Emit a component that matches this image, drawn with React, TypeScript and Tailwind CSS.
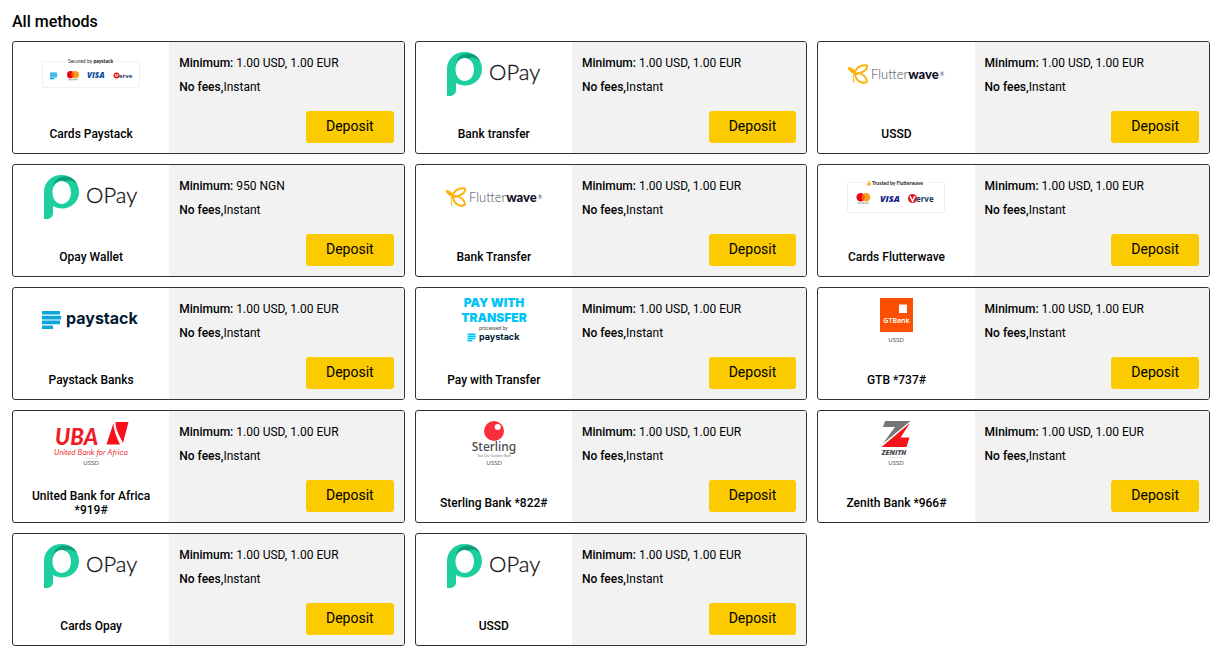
import type { ReactNode } from "react";

type Method = {
  name: string;
  minimum: string;
  logo: ReactNode;
};

function Logo({ title, children }: { title: string; children: ReactNode }) {
  return (
    <svg
      viewBox="0 0 100 48"
      role="img"
      aria-label={title}
      className="h-12 w-[100px] shrink-0"
    >
      {children}
    </svg>
  );
}

function OPay() {
  return (
    <Logo title="OPay">
      <path
        fill="#1dcf9f"
        fillRule="evenodd"
        d="M20.5 2C30.500 2 38 9.500 38 19C38 28.500 30.500 35.500 21 35.500C17.500 35.500 14.500 34.500 12 33V40C12 44 9 46 5 46H3V19C3 9.500 10.500 2 20.500 2ZM21 8C15.500 8 11.500 13 11.500 19.500C11.500 26 15.500 31 20.500 31C26 31 30 26 30 19.500C30 13 26 8 21 8Z"
      />
      <path
        fill="#0f9c79"
        d="M12 14C13 7 18 3.500 24 3.500C30 3.500 34.500 7 36 11C32 7.500 27 6.500 24 8.600C18 6.500 14 9 12 14Z"
      />
      <text x="45" y="30" fontSize="22" fontWeight="300" fill="#111" stroke="#111" strokeWidth="0.300" fontFamily="Lato, sans-serif">
        OPay
      </text>
    </Logo>
  );
}

function Flutterwave() {
  return (
    <Logo title="Flutterwave">
      <g fill="none" stroke="#fbb40f" strokeWidth="2" strokeLinejoin="round">
        <path d="M9 24C8.500 18.500 15 14 21 15.500C22 20 15 24 9 24Z" />
        <path d="M9 24C14 21.500 20.500 26 21 31.500C17 35 9.500 31 9 24Z" />
        <path fill="#fbb40f" strokeWidth="1" d="M9 23C5 23 3 21 2 17.500C5 17.500 8.500 19 9 23Z" />
        <path strokeWidth="1" d="M8 23C7 26 7 29 8 33" />
      </g>
      <text x="25" y="29" fontSize="13" fill="#4a4a5c" fontFamily="Lato, sans-serif">
        <tspan fontWeight="300">Flutter</tspan>
        <tspan fontWeight="900" fill="#12122b">wave</tspan>
      </text>
      <text x="94" y="26" fontSize="5" fill="#3a3a5c" fontFamily="Lato, sans-serif">
        ®
      </text>
    </Logo>
  );
}

function PaystackBars({ color = "#0ba4db" }: { color?: string }) {
  return (
    <g fill={color}>
      <rect width="18" height="3.600" rx="0.500" />
      <rect y="4.800" width="19" height="3.600" rx="0.500" />
      <rect y="9.600" width="18" height="3.600" rx="0.500" />
      <rect y="14.400" width="11" height="3.600" rx="0.500" />
    </g>
  );
}

function Mastercard() {
  return (
    <g>
      <circle cx="4" cy="4" r="4" fill="#eb001b" />
      <circle cx="9" cy="4" r="4" fill="#f79e1b" />
      <path fill="#ff5f00" d="M6.500 0.900A4 4 0 0 1 6.500 7.100A4 4 0 0 1 6.500 0.900Z" />
      <path stroke="#555" strokeWidth="0.700" strokeDasharray="1 0.300" d="M1 9.500H12" />
    </g>
  );
}

function CardsPaystack() {
  return (
    <Logo title="Secured by Paystack">
      <rect x="1.500" y="11.500" width="97" height="26" rx="1" fill="none" stroke="#f0f0f0" />
      <path stroke="#fff" strokeWidth="2" d="M25 11.500H73" />
      <text x="27" y="13" fontSize="5" fill="#222" fontFamily="Lato, sans-serif">
        Secured by <tspan fontWeight="900">paystack</tspan>
      </text>
      <g transform="translate(9 22.500) scale(.38)">
        <PaystackBars />
      </g>
      <g transform="translate(26 21) scale(.92)">
        <Mastercard />
      </g>
      <text x="46" y="28" fontSize="8" fontWeight="800" fontStyle="italic" fill="#0d4da1" fontFamily="Open Sans, sans-serif">
        VISA
      </text>
      <circle cx="75.500" cy="25.500" r="3" fill="#e4171b" />
      <path fill="none" stroke="#fff" d="M74 24L75.500 27L77 24" />
      <text x="78" y="28" fontSize="6" fontWeight="700" fill="#17395c" fontFamily="Open Sans, sans-serif">
        erve
      </text>
    </Logo>
  );
}

function CardsFlutterwave() {
  return (
    <Logo title="Trusted by Flutterwave">
      <rect x="1.500" y="9.500" width="97" height="30" rx="1" fill="none" stroke="#f0f0f0" />
      <path stroke="#fff" strokeWidth="2" d="M17 9.500H82" />
      <rect x="21" y="10" width="4" height="2.500" fill="#fbb040" />
      <path fill="none" stroke="#fbb040" strokeWidth="0.700" d="M22 10V8.500H24V10" />
      <text x="26" y="12" fontSize="5" fontWeight="700" fill="#222" fontFamily="Lato, sans-serif">
        Trusted by Flutterwave
      </text>
      <g transform="translate(10.500 20) scale(1.060)">
        <Mastercard />
      </g>
      <text x="34" y="29" fontSize="9" fontWeight="800" fontStyle="italic" fill="#15208b" fontFamily="Open Sans, sans-serif">
        VISA
      </text>
      <circle cx="66.500" cy="25.500" r="4.500" fill="#e4171b" />
      <path fill="none" stroke="#fff" strokeWidth="1.500" d="M64 23L66.500 28L69 23" />
      <text x="70" y="29" fontSize="8" fontWeight="700" fill="#17425f" fontFamily="Open Sans, sans-serif">
        erve
      </text>
    </Logo>
  );
}

function Paystack() {
  return (
    <Logo title="Paystack">
      <g transform="translate(1 15)">
        <PaystackBars />
      </g>
      <text x="25" y="28" fontSize="16" fontWeight="700" fill="#011b33" fontFamily="Inter, sans-serif">
        paystack
      </text>
    </Logo>
  );
}

function PayWithTransfer() {
  return (
    <Logo title="Pay with transfer, processed by Paystack">
      <g fill="#00c3f7" fontSize="12" fontWeight="900" textAnchor="middle" fontFamily="Inter, sans-serif">
        <text x="50" y="11">PAY WITH</text>
        <text x="50" y="26">TRANSFER</text>
      </g>
      <text x="35" y="34" fontSize="5" fill="#444" fontFamily="Lato, sans-serif">
        processed by
      </text>
      <g transform="translate(23.500 37.500) scale(.44)">
        <PaystackBars color="#00c3f7" />
      </g>
      <text x="35" y="44" fontSize="9" fontWeight="700" fill="#011b33" fontFamily="Inter, sans-serif">
        paystack
      </text>
    </Logo>
  );
}

function Ussd() {
  return (
    <text x="50" y="46" fontSize="6" textAnchor="middle" fill="#555" fontFamily="Lato, sans-serif">
      USSD
    </text>
  );
}

function GTBank() {
  return (
    <Logo title="GTBank USSD">
      <rect x="34" y="2" width="33" height="34" fill="#fb4f04" />
      <rect x="53" y="8.500" width="8" height="8.500" fill="#fff" />
      <text x="50.500" y="27" fontSize="7" fontWeight="600" textAnchor="middle" fill="#fff" fontFamily="Noto Sans, sans-serif">
        GTBank
      </text>
      <Ussd />
    </Logo>
  );
}

function UBA() {
  return (
    <Logo title="United Bank for Africa USSD">
      <g fill="#ee1c25" fontStyle="italic">
        <text x="14" y="26" fontSize="22" fontWeight="900" fontFamily="Lato, sans-serif">
          UBA
        </text>
        <text x="13" y="36" fontSize="7" fontFamily="Inter, sans-serif">
          United Bank for Africa
        </text>
      </g>
      <path fill="#fb0d1b" d="M72.500 4L65.500 25.500H79C76 19 72.500 12 72.500 4Z" />
      <path fill="#fb0d1b" d="M74.500 3H87.500L82 24C79.500 18 74.500 12 74.500 3Z" />
      <path stroke="#ccc" strokeWidth="0.500" d="M44 39.500H56" />
      <Ussd />
    </Logo>
  );
}

function Sterling() {
  return (
    <Logo title="Sterling USSD">
      <circle cx="50" cy="12" r="10" fill="#fb2f3b" />
      <circle cx="53.700" cy="8" r="3" fill="#fff" />
      <text x="50" y="32" fontSize="12" fontWeight="500" textAnchor="middle" fill="#4a4a4c" fontFamily="Noto Sans, sans-serif">
        Sterling
      </text>
      <text x="50" y="38" fontSize="3" textAnchor="middle" fill="#777" fontFamily="Lato, sans-serif">
        Your One-Customer Bank
      </text>
      <Ussd />
    </Logo>
  );
}

function Zenith() {
  return (
    <Logo title="Zenith USSD">
      <path fill="#73777a" d="M39 2H64.500L37 24.500L49 8H37Z" />
      <path fill="#f5131c" d="M64 4L54.500 18.500H63.500L60.500 28H35.500Z" />
      <text x="48" y="36" fontSize="7" fontWeight="800" fontStyle="italic" textAnchor="middle" fill="#4c4c50" fontFamily="Open Sans, sans-serif">
        ZENITH
      </text>
      <path stroke="#ccc" strokeWidth="0.500" d="M43 38.500H56" />
      <Ussd />
    </Logo>
  );
}

const usdEur = "1.00 USD, 1.00 EUR";

const methods: Method[] = [
  { name: "Cards Paystack", minimum: usdEur, logo: <CardsPaystack /> },
  { name: "Bank transfer", minimum: usdEur, logo: <OPay /> },
  { name: "USSD", minimum: usdEur, logo: <Flutterwave /> },
  { name: "Opay Wallet", minimum: "950 NGN", logo: <OPay /> },
  { name: "Bank Transfer", minimum: usdEur, logo: <Flutterwave /> },
  { name: "Cards Flutterwave", minimum: usdEur, logo: <CardsFlutterwave /> },
  { name: "Paystack Banks", minimum: usdEur, logo: <Paystack /> },
  { name: "Pay with Transfer", minimum: usdEur, logo: <PayWithTransfer /> },
  { name: "GTB *737#", minimum: usdEur, logo: <GTBank /> },
  { name: "United Bank for Africa *919#", minimum: usdEur, logo: <UBA /> },
  { name: "Sterling Bank *822#", minimum: usdEur, logo: <Sterling /> },
  { name: "Zenith Bank *966#", minimum: usdEur, logo: <Zenith /> },
  { name: "Cards Opay", minimum: usdEur, logo: <OPay /> },
  { name: "USSD", minimum: usdEur, logo: <OPay /> },
];

function MethodCard({ method }: { method: Method }) {
  return (
    <li className="flex overflow-hidden rounded-[3px] border border-[#333]">
      <div className="flex w-2/5 flex-col items-center px-2 pt-2">
        {method.logo}
        <h2 className="mt-[22px] flex h-7 items-center text-center text-xs leading-[14px] font-medium">
          {method.name}
        </h2>
      </div>
      <div className="flex flex-1 flex-col bg-[#f2f2f2] px-[10px] pt-[9px] pb-[10px] text-xs leading-6">
        <p>
          <span className="font-medium">Minimum:</span> {method.minimum}
        </p>
        <p>
          <span className="font-medium">No fees,</span>Instant
        </p>
        <button
          type="button"
          className="mt-3 h-8 self-end rounded-[3px] bg-[#fbcb00] px-5 pb-0.5 text-sm"
        >
          Deposit
        </button>
      </div>
    </li>
  );
}

export default function App() {
  return (
    <main className="bg-white pt-[10px] pr-[11px] pb-2 pl-3 font-[Roboto,sans-serif] text-black">
      <h1 className="text-base leading-6 font-medium">All methods</h1>
      <ul className="mt-[7px] grid grid-cols-3 gap-[10px]">
        {methods.map((method, i) => (
          <MethodCard key={i} method={method} />
        ))}
      </ul>
    </main>
  );
}
